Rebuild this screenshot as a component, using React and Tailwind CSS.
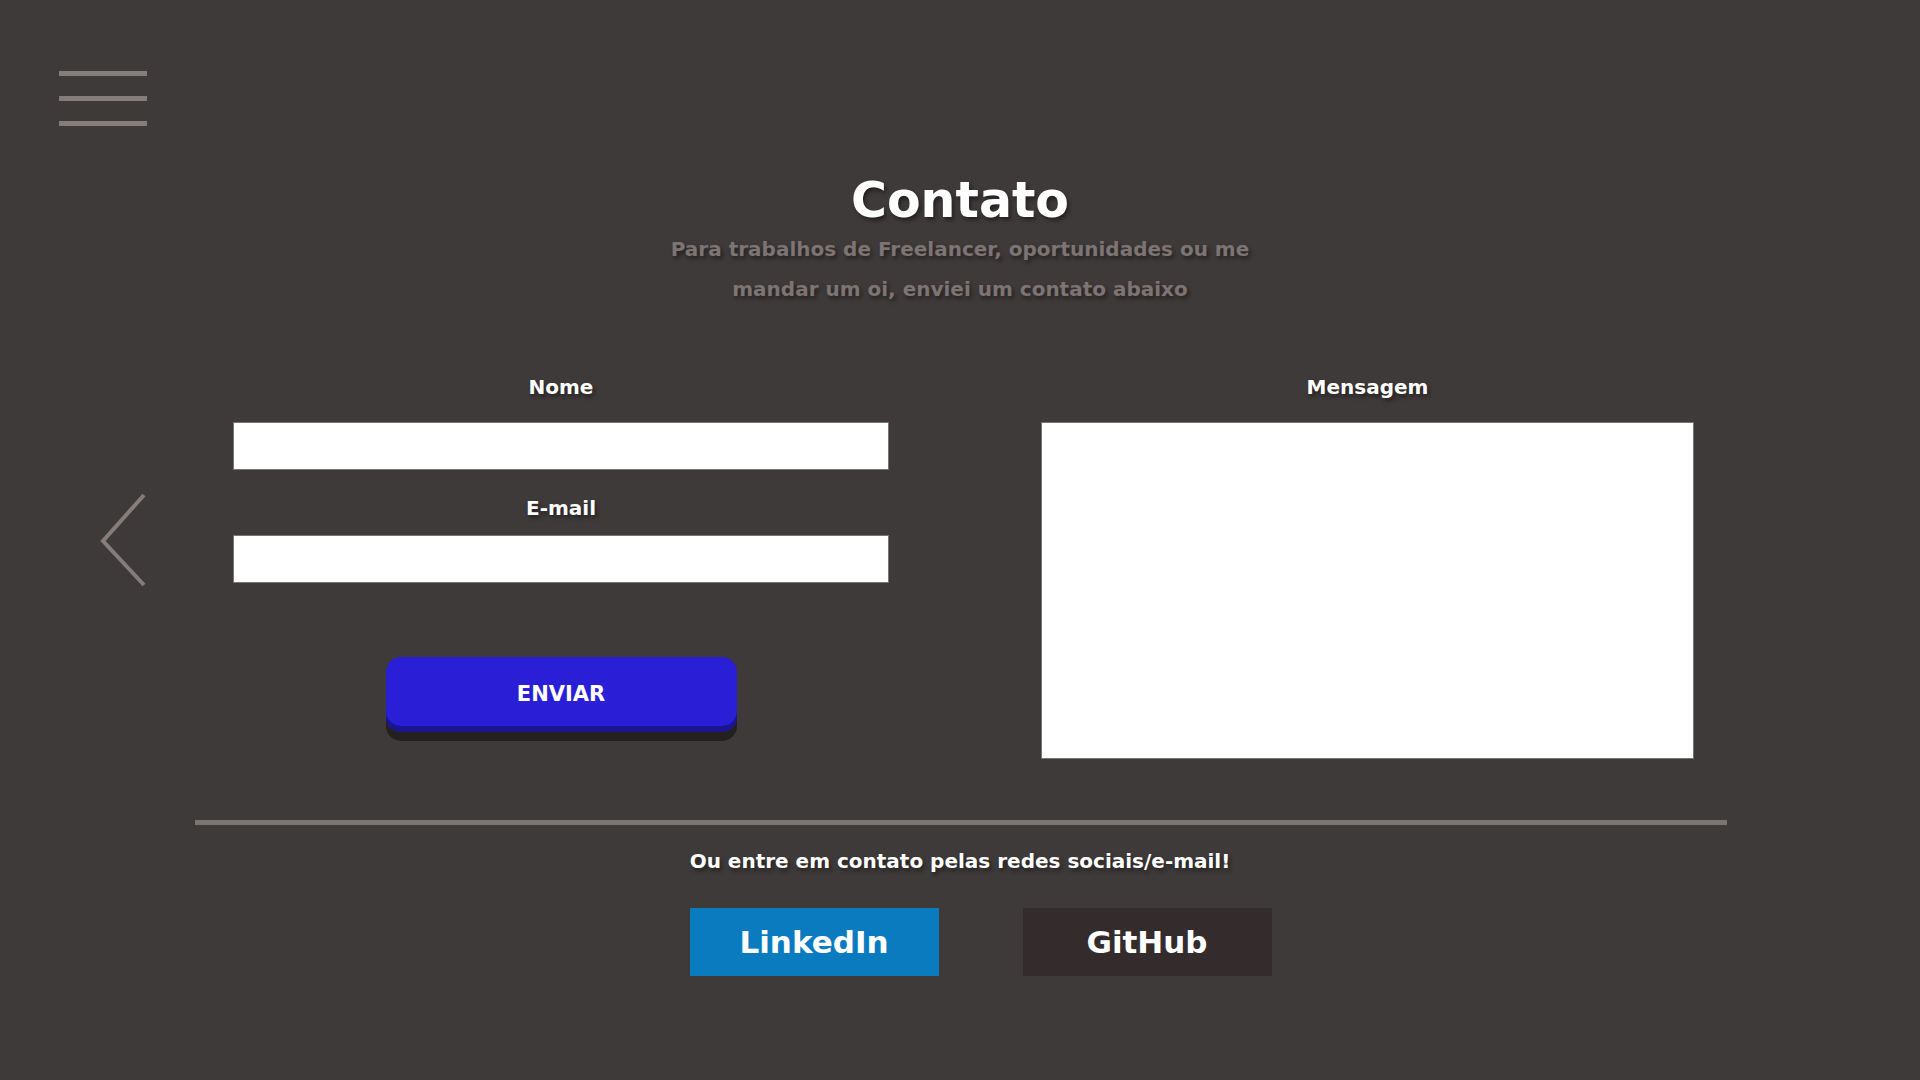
import React from "react";

const shadow = "[text-shadow:2px_3px_4px_rgba(0,0,0,0.45)]";

function Menu() {
  return (
    <button className="absolute left-[59px] top-[71px] flex flex-col gap-[20px]">
      <span className="block w-[88px] h-[5px] bg-[#857d7b]" />
      <span className="block w-[88px] h-[5px] bg-[#857d7b]" />
      <span className="block w-[88px] h-[5px] bg-[#857d7b]" />
    </button>
  );
}

function Chevron() {
  return (
    <svg
      className="absolute left-[96px] top-[488px]"
      width="56"
      height="104"
      viewBox="0 0 56 104"
    >
      <polyline
        points="48,7 7,53 48,97"
        fill="none"
        stroke="#857d7b"
        strokeWidth="4"
      />
    </svg>
  );
}

function Field({ label, className, children }) {
  return (
    <div className={"flex flex-col items-center " + className}>
      <label className={"text-[20px] leading-[24px] font-bold text-white " + shadow}>
        {label}
      </label>
      {children}
    </div>
  );
}

export default function App() {
  return (
    <div
      className="relative min-h-[1080px] w-full bg-[#3e3a39] text-white"
      style={{ fontFamily: '"DejaVu Sans", Verdana, sans-serif' }}
    >
      <Menu />
      <Chevron />

      <main className="flex flex-col items-center pt-[173px]">
        <h1 className={"text-[49px] leading-[56px] font-bold text-white " + shadow}>
          Contato
        </h1>
        <p
          className={
            "max-w-[620px] text-center text-[20px] leading-[40px] font-bold text-[#7d7473] " +
            shadow
          }
        >
          Para trabalhos de Freelancer, oportunidades ou me mandar um oi, enviei um contato abaixo
        </p>

        <form className="mt-[66px] flex justify-center gap-[152px] pl-[7px]">
          <div className="flex w-[656px] flex-col items-center">
            <Field label="Nome" className="w-full">
              <input
                type="text"
                className="mt-[23px] h-[48px] w-full border border-[#767676] bg-white"
              />
            </Field>
            <Field label="E-mail" className="mt-[26px] w-full">
              <input
                type="email"
                className="mt-[15px] h-[48px] w-full border border-[#767676] bg-white"
              />
            </Field>
            <button
              type="button"
              className="mt-[74px] h-[75px] w-[351px] rounded-[15px] bg-[#2a1fd6] text-[21px] font-bold text-white shadow-[inset_0_-6px_0_#1c1590,0_9px_0_#242020]"
            >
              ENVIAR
            </button>
          </div>

          <Field label="Mensagem" className="w-[653px]">
            <textarea className="mt-[23px] h-[337px] w-full resize-none border border-[#767676] bg-white" />
          </Field>
        </form>

        <hr className="mt-[61px] h-[5px] w-[1532px] border-0 bg-[#7c7473] ml-[2px]" />

        <p className={"mt-[24px] text-[20px] leading-[24px] font-bold text-white " + shadow}>
          Ou entre em contato pelas redes sociais/e-mail!
        </p>

        <div className="mt-[35px] flex gap-[84px] pl-[41px]">
          <a className="flex h-[68px] w-[249px] items-center justify-center bg-[#0a7bbf] text-[31px] font-bold text-white">
            LinkedIn
          </a>
          <a className="flex h-[68px] w-[249px] items-center justify-center bg-[#332b2c] text-[31px] font-bold text-white">
            GitHub
          </a>
        </div>
      </main>
    </div>
  );
}
